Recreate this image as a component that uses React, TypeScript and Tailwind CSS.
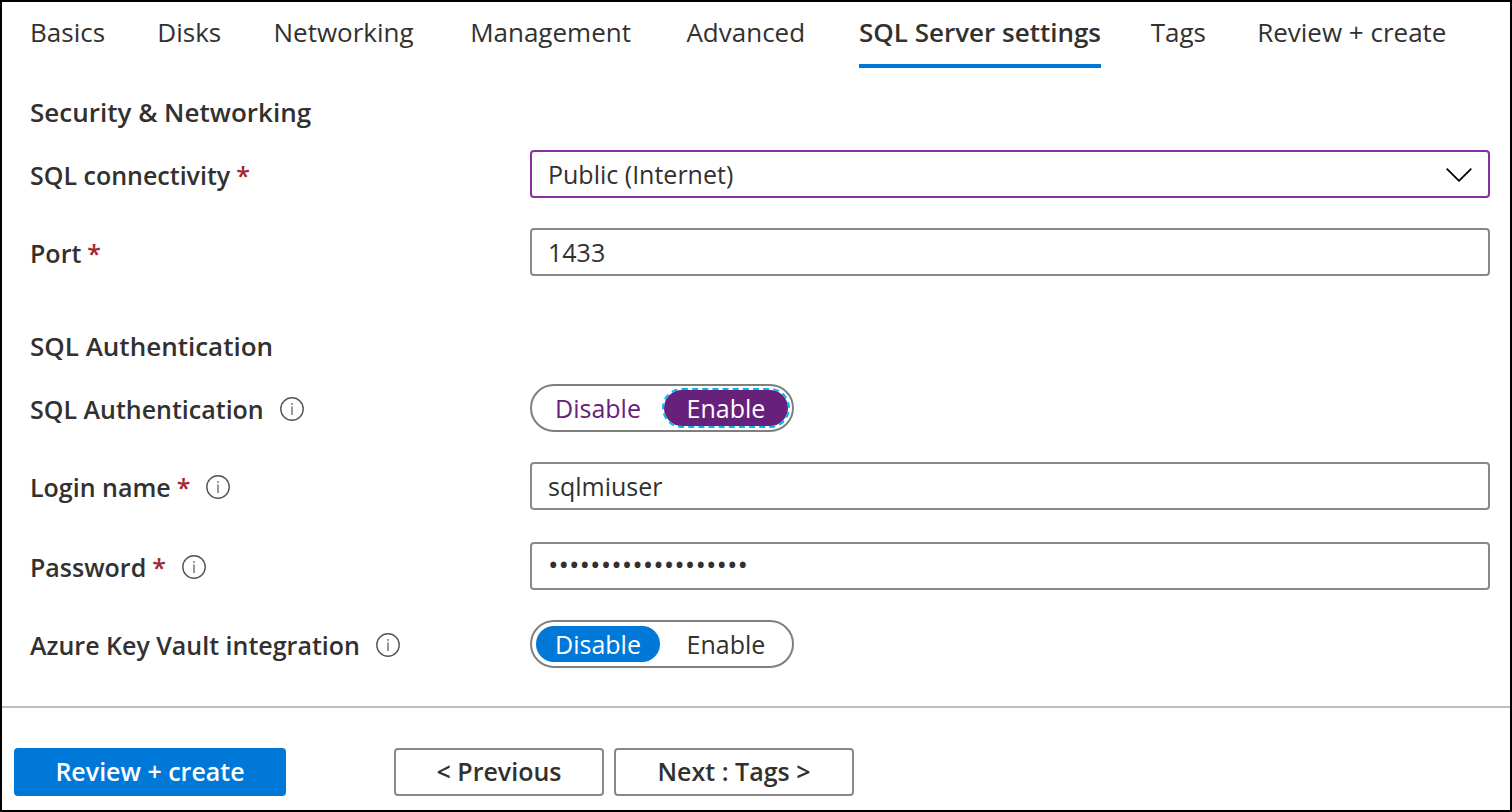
import { useState } from "react";
import type { ReactNode } from "react";

const tabs = [
  "Basics",
  "Disks",
  "Networking",
  "Management",
  "Advanced",
  "SQL Server settings",
  "Tags",
  "Review + create",
];

function InfoIcon() {
  return (
    <svg viewBox="0 0 24 24" className="size-6 shrink-0" fill="none" aria-hidden="true">
      <circle cx="12" cy="12" r="11.2" stroke="#555" strokeWidth="1.4" />
      <rect x="11.4" y="9.5" width="1.2" height="8.5" fill="#555" />
      <rect x="11.3" y="6.2" width="1.4" height="1.6" fill="#555" />
    </svg>
  );
}

function Label({
  text,
  htmlFor,
  id,
  required,
  info,
}: {
  text: string;
  htmlFor?: string;
  id?: string;
  required?: boolean;
  info?: boolean;
}) {
  return (
    <div className="flex w-[500px] shrink-0 items-center gap-4 pt-0.5 font-semibold">
      <label htmlFor={htmlFor} id={id} className="flex gap-1.5">
        {text}
        {required && <span className="text-[#a4262c]">*</span>}
      </label>
      {info && <InfoIcon />}
    </div>
  );
}

function Row({ children, className }: { children: ReactNode; className: string }) {
  return <div className={`flex min-h-12 items-center ${className}`}>{children}</div>;
}

function Toggle({
  name,
  labelledBy,
  initial,
  visited,
}: {
  name: string;
  labelledBy: string;
  initial: string;
  visited?: boolean;
}) {
  const [value, setValue] = useState(initial);
  return (
    <div
      role="radiogroup"
      aria-labelledby={labelledBy}
      className="flex h-12 items-center gap-1 rounded-full border-2 border-[#7f7f7f] p-1"
    >
      {["Disable", "Enable"].map((option) => {
        const selected = value === option;
        const idle = visited ? "text-[#68217a]" : "text-[#323130]";
        const active = visited
          ? "bg-[#68217a] text-white outline-2 outline-dashed outline-[#00b7f0]"
          : "bg-[#0078d7] text-white";
        return (
          <label
            key={option}
            className={`relative flex h-9 w-[124px] cursor-pointer items-center justify-center rounded-full ${
              selected ? active : idle
            }`}
          >
            <input
              type="radio"
              name={name}
              value={option}
              checked={selected}
              onChange={() => setValue(option)}
              className="sr-only"
            />
            {option}
          </label>
        );
      })}
    </div>
  );
}

const field =
  "h-12 w-full min-w-0 rounded-[4px] border-2 bg-white px-4 text-[#323130] outline-none";

export default function App() {
  return (
    <div className="flex min-h-screen flex-col border-2 border-black bg-white font-['Open_Sans','Noto_Sans',sans-serif] text-[25px] leading-9 text-[#323130]">
      <nav className="flex justify-between pt-3 pr-14 pl-7 text-[26px]">
        {tabs.map((tab) => (
          <a
            key={tab}
            href="#"
            data-label={tab}
            className={`border-b-4 pb-3.5 whitespace-nowrap after:invisible after:block after:h-0 after:overflow-hidden after:font-semibold after:content-[attr(data-label)] ${
              tab === "SQL Server settings"
                ? "border-[#0078d7] font-semibold"
                : "border-transparent"
            }`}
          >
            {tab}
          </a>
        ))}
      </nav>

      <main className="grow pt-[26px] pr-5 pb-[38px] pl-7">
        <h2 className="text-[26px] font-semibold">Security &amp; Networking</h2>
        <Row className="mt-5">
          <Label text="SQL connectivity" htmlFor="connectivity" required />
          <div className="relative flex grow">
            <select id="connectivity" className={`${field} appearance-none border-[#8a2da5]`}>
              <option>Public (Internet)</option>
              <option>Private (within Virtual Network)</option>
              <option>Local (inside VM only)</option>
            </select>
            <svg
              viewBox="0 0 26 14"
              className="pointer-events-none absolute top-[18px] right-[18px] h-3.5 w-[26px]"
              fill="none"
              aria-hidden="true"
            >
              <path d="M0.7 0.7L13 12.8L25.3 0.7" stroke="#000" strokeWidth="1.8" />
            </svg>
          </div>
        </Row>
        <Row className="mt-[30px]">
          <Label text="Port" htmlFor="port" required />
          <input id="port" defaultValue="1433" className={`${field} border-[#8a8886]`} />
        </Row>

        <h2 className="mt-[52px] text-[26px] font-semibold">SQL Authentication</h2>
        <Row className="mt-5">
          <Label text="SQL Authentication" id="auth-label" info />
          <Toggle name="auth" labelledBy="auth-label" initial="Enable" visited />
        </Row>
        <Row className="mt-[30px]">
          <Label text="Login name" htmlFor="login" required info />
          <input id="login" defaultValue="sqlmiuser" className={`${field} border-[#8a8886]`} />
        </Row>
        <Row className="mt-8">
          <Label text="Password" htmlFor="password" required info />
          <input
            id="password"
            type="password"
            defaultValue="abcdefghijklmnopqrs"
            className={`${field} border-[#8a8886] pb-1 text-[28px]`}
          />
        </Row>
        <Row className="mt-[30px]">
          <Label text="Azure Key Vault integration" id="vault-label" info />
          <Toggle name="vault" labelledBy="vault-label" initial="Disable" />
        </Row>
      </main>

      <footer className="flex border-t-2 border-[#bdbdbd] px-3 pt-10 pb-3.5 font-semibold">
        <button className="mr-[108px] h-12 w-[272px] rounded-[4px] bg-[#0078d7] pb-0.5 text-white">
          Review + create
        </button>
        <button className="mr-2.5 h-12 w-[210px] rounded-[4px] border-2 border-[#8a8886] pb-0.5">
          &lt; Previous
        </button>
        <button className="h-12 w-60 rounded-[4px] border-2 border-[#8a8886] pb-0.5">
          Next : Tags &gt;
        </button>
      </footer>
    </div>
  );
}
